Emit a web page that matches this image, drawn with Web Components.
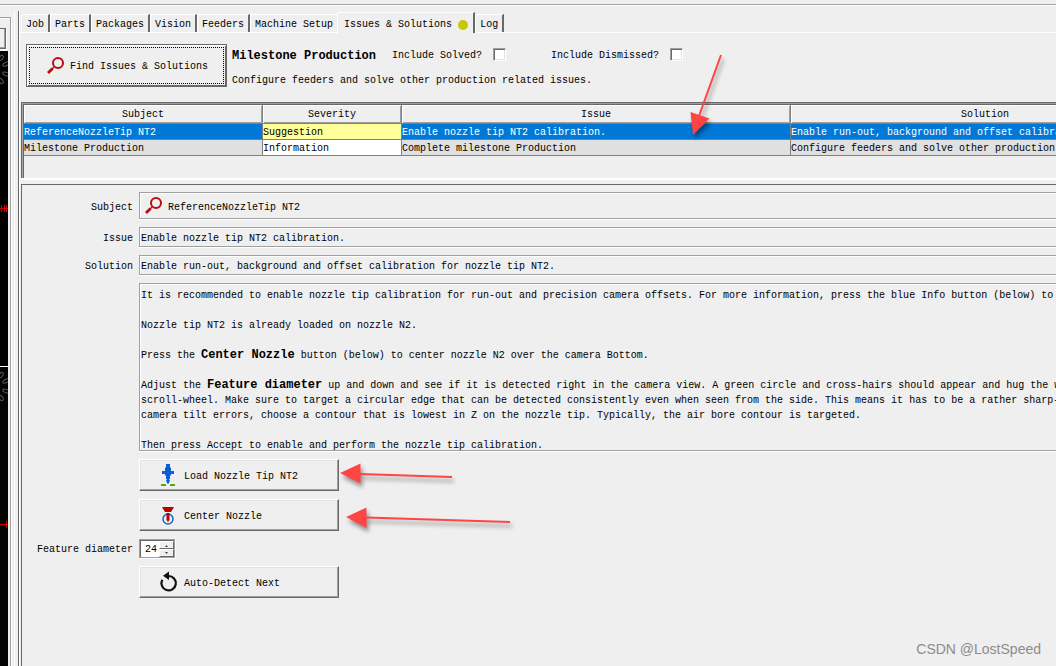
<!DOCTYPE html>
<html lang="en">
<head>
<meta charset="utf-8">
<title>Issues &amp; Solutions</title>
<style>
html, body { height: 100%; }
body {
  margin: 0; overflow: hidden; background: #efefef; color: #000;
  font: 10px/14px "Liberation Mono", "DejaVu Sans Mono", monospace;
  --dark: #696969; --mid: #a0a0a0; --light: #fff; --face: #efefef;
}
rich-note b { font-size: 12px; line-height: 14px; }
</style>
</head>
<body>
<app-window>
  <camera-strip slot="side"></camera-strip>
  <tab-strip>
    <tab-item>Job</tab-item><tab-item>Parts</tab-item><tab-item>Packages</tab-item><tab-item>Vision</tab-item><tab-item>Feeders</tab-item><tab-item>Machine Setup</tab-item><tab-item selected dot>Issues &amp; Solutions</tab-item><tab-item>Log</tab-item>
  </tab-strip>
  <issue-toolbar></issue-toolbar>
  <issue-table></issue-table>
  <solution-panel>
    <detail-row label="Subject" icon="search">ReferenceNozzleTip NT2</detail-row>
    <detail-row label="Issue">Enable nozzle tip NT2 calibration.</detail-row>
    <detail-row label="Solution">Enable run-out, background and offset calibration for nozzle tip NT2.</detail-row>
    <rich-note>
      <p>It is recommended to enable nozzle tip calibration for run-out and precision camera offsets. For more information, press the blue Info button (below) to</p>
      <p>Nozzle tip NT2 is already loaded on nozzle N2.</p>
      <p>Press the <b>Center Nozzle</b> button (below) to center nozzle N2 over the camera Bottom.</p>
      <p>Adjust the <b>Feature diameter</b> up and down and see if it is detected right in the camera view. A green circle and cross-hairs should appear and hug the w<br>scroll-wheel. Make sure to target a circular edge that can be detected consistently even when seen from the side. This means it has to be a rather sharp-<br>camera tilt errors, choose a contour that is lowest in Z on the nozzle tip. Typically, the air bore contour is targeted.</p>
      <p>Then press Accept to enable and perform the nozzle tip calibration.</p>
    </rich-note>
    <action-button icon="load">Load Nozzle Tip NT2</action-button>
    <action-button icon="center">Center Nozzle</action-button>
    <number-row label="Feature diameter" value="24"></number-row>
    <action-button icon="again">Auto-Detect Next</action-button>
  </solution-panel>
  <arrow-marks slot="overlay"></arrow-marks>
  <water-mark slot="overlay">CSDN @LostSpeed</water-mark>
</app-window>

<script>
const define = (name, render) => customElements.define(name, class extends HTMLElement {
  connectedCallback() {
    if (this.shadowRoot) return;
    this.attachShadow({ mode: 'open' }).innerHTML = render(this);
  }
});

const icons = {
  search: `<svg width="20" height="20" viewBox="0 0 20 20"><circle cx="13" cy="7" r="5" fill="none" stroke="#b90c0c" stroke-width="2"/><path d="M9 11L7 13" stroke="#b90c0c" stroke-width="1.2"/><path d="M7.6 12.4L3 17" stroke="#b90c0c" stroke-width="2.8"/></svg>`,
  load: `<svg width="24" height="24" viewBox="0 0 24 24"><path d="M10 1h4v3l1 1v3h3v3h-3v1l-1 1v3h-4v-3l-1-1v-1H6V8h3V5l1-1z" fill="#0a5fd8"/><path d="M10 15h4l-1 2h1l-1 3-1 1-1-1-1-3h1z" fill="#0a5fd8"/><path d="M5 21h5v2H5zM14 21h5v2h-5z" fill="#55aa00"/></svg>`,
  center: `<svg width="24" height="24" viewBox="0 0 24 24"><path d="M6 4h12l-3 5H9z" fill="#bb0000"/><circle cx="12" cy="16" r="5" fill="none" stroke="#1565d0" stroke-width="1.5"/><path d="M10.500 10h3v7l-1.500 2-1.500-2z" fill="#bb0000"/></svg>`,
  again: `<svg width="24" height="24" viewBox="0 0 24 24"><path d="M6.300 9.800A7.200 7.200 0 1 0 12.500 6" fill="none" stroke="#111" stroke-width="2.200"/><path d="M13 1.500v8.500L7 5.800z" fill="#111"/></svg>`
};

define('app-window', () => `<style>
  :host { display: flex; flex-direction: column; height: 100vh; position: relative; overflow: hidden; box-sizing: border-box; padding-top: 4px; }
  .rule { flex: none; height: 1px; border-top: 1px solid var(--mid); background: var(--light); }
  .split { display: flex; flex: 1; min-height: 0; }
  main { flex: 1; min-width: 0; margin-top: 5px; padding-top: 1px; display: flex; flex-direction: column; border-left: 1px solid var(--dark); box-shadow: inset 1px 0 #fff; }
  </style><div class="rule"></div><div class="split"><slot name="side"></slot><main><slot></slot></main></div><slot name="overlay"></slot>`);

define('camera-strip', () => {
  const petals = y => `<g fill="none" stroke="#5c5c5c"><ellipse cx="1" cy="${y + 4}" rx="1.700" ry="3" transform="rotate(35 1 ${y + 4})"/><ellipse cx="6" cy="${y + 10}" rx="3.500" ry="1.700" transform="rotate(-25 6 ${y + 10})"/><ellipse cx="6" cy="${y + 20}" rx="3.500" ry="1.700" transform="rotate(20 6 ${y + 20})"/><ellipse cx="1" cy="${y + 27}" rx="1.700" ry="3" transform="rotate(-35 1 ${y + 27})"/></g>`;
  return `<style>
  :host { flex: none; width: 18px; box-sizing: border-box; padding-top: 11px; display: flex; }
  .frame { width: 10px; display: flex; flex-direction: column; border-top: 1px solid var(--mid); border-right: 1px solid var(--mid); box-shadow: inset 0 1px #fff, 1px 0 #fff; }
  .corner { width: 5px; height: 19px; flex: none; margin: 10px 0 2px; border: 1px solid var(--dark); border-left: 0; box-shadow: inset -1px -1px var(--mid), 1px 1px #fff; box-sizing: content-box; }
  .view { width: 8px; flex: 1; min-height: 0; overflow: hidden; background: #050202; }
  svg { display: block; }
  .divider { width: 1px; margin: -6px 0 0 3px; background: #fff; }
  </style><div class="frame"><div class="corner"></div><div class="view"><svg width="8" height="615" viewBox="0 0 8 615"><path d="M0 0h8v315H0z" fill="#000"/>${petals(3)}${petals(320)}<path d="M0 157.500h8M1.500 154v7M4.500 154v7M6.500 154v7M0 473.500h8M6.500 470v7" stroke="#d40000"/><path d="M0 315.500h8" stroke="#fff"/></svg></div></div><div class="divider"></div>`;
});

define('tab-strip', () => `<style>
  :host { flex: none; display: flex; align-items: flex-end; height: 20px; padding-left: 2px; box-shadow: 0 1px #fff; margin-bottom: 1px; }
  </style><slot></slot>`);

define('tab-item', el => `<style>
  :host { display: block; flex: none; }
  :host([selected]) { margin-left: -2px; position: relative; }
  a { display: flex; align-items: flex-end; box-sizing: border-box; height: 18px; padding: 0 4px; color: inherit; text-decoration: none; border: solid; border-width: 1px 2px 0 1px; border-color: #fff var(--dark) #fff #fff; border-top-left-radius: 2px; white-space: nowrap; background: var(--face); }
  :host([selected]) a { height: 21px; margin-bottom: -1px; padding: 0 5px 1px 6px; }
  i { width: 10px; height: 10px; border-radius: 5px; background: #c8c800; margin: 0 0 2px 6px; }
  </style><a href="#"><slot></slot>${el.hasAttribute('dot') ? '<i></i>' : ''}</a>`);

define('issue-toolbar', () => `<style>
  :host { flex: none; display: flex; align-items: flex-start; gap: 5px; padding: 11px 7px 14px; }
  button { flex: none; box-sizing: border-box; width: 201px; height: 43px; padding: 0 12px 0 18px; display: flex; align-items: center; gap: 5px; font: inherit; color: inherit; background: var(--face); border: 1px solid var(--dark); box-shadow: inset 1px 1px #fff, inset -1px -1px var(--dark); outline: 1px dotted #000; outline-offset: -4px; }
  span { margin-top: 2px; }
  .line { display: flex; align-items: center; height: 24px; white-space: nowrap; }
  h2 { margin: 0 16px 0 0; font-size: 12px; line-height: 14px; }
  check-field + check-field { margin-left: 45px; }
  p { margin: 6px 0 0; white-space: nowrap; }
  </style><button type="button">${icons.search}<span>Find Issues &amp; Solutions</span></button>
  <div><div class="line"><h2>Milestone Production</h2><check-field label="Include Solved?"></check-field><check-field label="Include Dismissed?"></check-field></div>
  <p>Configure feeders and solve other production related issues.</p></div>`);

define('check-field', el => `<style>
  :host { display: block; }
  label { display: flex; align-items: center; gap: 11px; }
  input { appearance: none; margin: 0 0 3px; width: 13px; height: 13px; box-sizing: border-box; background: #fff; border: 1px solid; border-color: var(--mid) #fff #fff var(--mid); box-shadow: inset 1px 1px var(--dark), inset -1px -1px #e3e3e3; }
  </style><label>${el.getAttribute('label')}<input type="checkbox"></label>`);

define('issue-table', () => `<style>
  :host { display: block; flex: none; height: 76px; margin-left: 2px; overflow: hidden; box-sizing: border-box; border: solid var(--dark); border-width: 1px 0 0 1px; box-shadow: inset 1px 1px var(--mid), inset 2px 2px var(--dark), 0 2px #fff; padding: 2px 0 0 2px; }
  table { table-layout: fixed; border-collapse: separate; border-spacing: 0; width: 1156px; }
  .a { width: 239px; } .b { width: 139px; } .c, .d { width: 389px; }
  th, td { box-sizing: border-box; border: solid #808080; border-width: 0 1px 1px 0; white-space: nowrap; overflow: hidden; }
  th { height: 19px; padding: 2px 0 0; font-weight: normal; text-align: center; box-shadow: inset 1px 1px #fff, inset -1px -1px var(--mid); }
  td { height: 16px; padding: 2px 0 0; line-height: 13px; background: #e0e0e0; }
  .on td { background: #0078d7; color: #fff; }
  .on .warn { background: #ffff99; color: #000; }
  td.info { background: #fff; }
  </style><table><colgroup><col class="a"><col class="b"><col class="c"><col class="d"></colgroup>
  <thead><tr><th>Subject</th><th>Severity</th><th>Issue</th><th>Solution</th></tr></thead>
  <tbody><tr class="on"><td>ReferenceNozzleTip NT2</td><td class="warn">Suggestion</td><td>Enable nozzle tip NT2 calibration.</td><td>Enable run-out, background and offset calibration for nozzle tip NT2.</td></tr>
  <tr><td>Milestone Production</td><td class="info">Information</td><td>Complete milestone Production</td><td>Configure feeders and solve other production related issues.</td></tr></tbody></table>`);

define('solution-panel', () => `<style>
  :host { flex: 1; min-height: 0; display: flex; flex-direction: column; gap: 8px; margin: 6px 0 0 2px; padding-top: 7px; border: solid var(--dark); border-width: 1px 0 0 1px; }
  </style><slot></slot>`);

define('detail-row', el => `<style>
  :host { flex: none; display: grid; grid-template-columns: 111px minmax(0, 1fr); column-gap: 6px; align-items: center; }
  label { text-align: right; padding-top: 4px; }
  output { display: flex; align-items: center; gap: 5px; height: 20px; box-sizing: border-box; padding: 3px 1px 0; border: solid var(--mid); border-width: 1px 0 1px 1px; box-shadow: inset 1px 1px #fff, 0 1px #fff; white-space: nowrap; }
  :host([icon]) output { height: 27px; padding: 0 3px; }
  :host([icon]) span { padding-top: 4px; }
  svg { flex: none; }
  </style><label for="v">${el.getAttribute('label')}</label><output id="v">${icons[el.getAttribute('icon')] || ''}<span><slot></slot></span></output>`);

define('rich-note', () => `<style>
  :host { flex: none; display: block; margin-left: 117px; height: 168px; box-sizing: border-box; overflow: hidden; padding: 4px 0 0 1px; border: solid var(--mid); border-width: 1px 0 1px 1px; box-shadow: inset 1px 1px #fff, 0 1px #fff; line-height: 15px; white-space: nowrap; }
  ::slotted(p) { margin: 0 0 15px; }
  </style><slot></slot>`);

define('action-button', el => `<style>
  :host { flex: none; display: block; margin-left: 117px; }
  button { display: flex; align-items: center; gap: 4px; box-sizing: border-box; width: 200px; height: 32px; padding: 0 0 0 16px; font: inherit; color: inherit; background: var(--face); border: 1px solid; border-color: #fff var(--dark) var(--dark) #fff; box-shadow: inset -1px -1px var(--mid), inset 1px 1px #e3e3e3; }
  span { padding-top: 4px; }
  </style><button type="button">${icons[el.getAttribute('icon')]}<span><slot></slot></span></button>`);

define('number-row', el => `<style>
  :host { flex: none; display: grid; grid-template-columns: 111px auto; justify-content: start; column-gap: 6px; align-items: center; }
  label { text-align: right; padding-top: 2px; }
  .box { display: flex; width: 36px; height: 19px; box-sizing: border-box; background: #fff; border: 1px solid var(--mid); box-shadow: inset 1px 1px var(--dark), 1px 1px #fff; padding: 1px 0 0 1px; }
  input { appearance: textfield; width: 18px; min-width: 0; padding: 2px 0 0 4px; box-sizing: border-box; margin: 0; border: 0; outline: 0; background: none; font: inherit; color: inherit; }
  input::-webkit-inner-spin-button { display: none; }
  .steps { flex: 1; display: flex; flex-direction: column; }
  button { flex: 1; min-height: 0; padding: 0; display: grid; place-items: center; background: var(--face); border: 1px solid; border-color: #fff var(--dark) var(--dark) #fff; }
  </style><label for="n">${el.getAttribute('label')}</label><div class="box"><input id="n" type="number" value="${el.getAttribute('value')}"><div class="steps"><button type="button" aria-label="Increase"><svg width="5" height="3"><path d="M1 3L2.500 1 4 3z" fill="#444"/></svg></button><button type="button" aria-label="Decrease"><svg width="5" height="3"><path d="M1 0L2.500 2 4 0z" fill="#444"/></svg></button></div></div>`);

define('arrow-marks', () => `<style>
  :host { position: absolute; top: 0; left: 0; pointer-events: none; }
  svg { display: block; filter: drop-shadow(2px 4px 2px rgba(0,0,0,.4)); }
  </style><svg width="760" height="560" viewBox="0 0 760 560" fill="#ff4444" stroke="#ff4444" aria-hidden="true">
  <g stroke-width="2"><path d="M721 55L699 116M452 477L360 474M510 522L366 517.500" fill="none"/></g>
  <g stroke="none"><path d="M693 135L690.500 112 709.500 118.500z"/><path d="M340 473L360.500 463.500V483.500z"/><path d="M346 517L366.500 507.500V528z"/></g></svg>`);

define('water-mark', () => `<style>
  :host { position: absolute; right: 15px; bottom: 8px; font: 14px/18px "Liberation Sans", Arial, sans-serif; color: #8c8c8c; }
  </style><slot></slot>`);
</script>
</body>
</html>
